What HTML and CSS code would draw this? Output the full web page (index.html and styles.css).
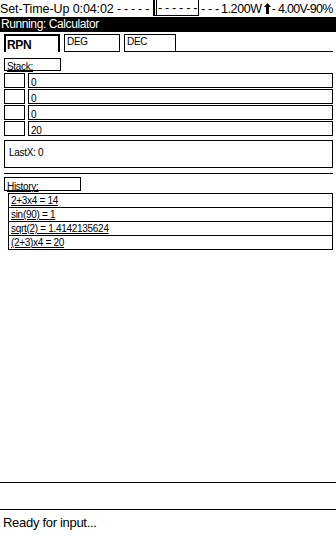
FILE: index.html
```html
<!DOCTYPE html>
<html lang="en">
<head>
  <meta charset="UTF-8">
  <title>Calculator</title>
  <link rel="stylesheet" href="styles.css">
</head>
<body>
  <div class="status">
    <span class="clock">Set-Time-Up 0:04:02</span>
    <span class="dashes">- - - - -</span>
    <span class="meter"><span class="needle"></span><span class="dashes">- - - - - -</span></span>
    <span class="dashes">- - -</span>
    <span class="power">1.200W</span>
    <svg class="arrow" width="7" height="11" viewBox="0 0 7 11"><path d="M3.5 0 L7 4 L5 4 L5 11 L2 11 L2 4 L0 4 Z" fill="#000"/></svg>
    <span class="battery">- 4.00V-90%</span>
  </div>
  <div class="titlebar">Running: Calculator</div>

  <div class="app">
    <div class="tabs">
      <div class="tab active">RPN</div>
      <div class="tab">DEG</div>
      <div class="tab">DEC</div>
      <div class="tab-fill"></div>
    </div>

    <div class="label">Stack:</div>
    <div class="stack">
      <div class="row"><div class="idx"></div><div class="val">0</div></div>
      <div class="row"><div class="idx"></div><div class="val">0</div></div>
      <div class="row"><div class="idx"></div><div class="val">0</div></div>
      <div class="row"><div class="idx"></div><div class="val">20</div></div>
    </div>

    <div class="lastx">LastX: 0</div>
    <div class="rule"></div>

    <div class="label history-label">History:</div>
    <div class="history">
      <div class="item">2+3x4 = 14</div>
      <div class="item">sin(90) = 1</div>
      <div class="item">sqrt(2) = 1.4142135624</div>
      <div class="item">(2+3)x4 = 20</div>
    </div>
  </div>

  <div class="bottom">
    <div class="input-line"></div>
    <div class="message">Ready for input...</div>
  </div>
</body>
</html>
```

FILE: styles.css
```css
html, body {
  margin: 0;
  padding: 0;
}
body {
  width: 336px;
  height: 536px;
  display: flex;
  flex-direction: column;
  font-family: "Liberation Sans", Arial, sans-serif;
  color: #000;
  background: #fff;
  overflow: hidden;
}

/* top status line */
.status {
  height: 17px;
  display: flex;
  align-items: center;
  font-size: 12.5px;
  white-space: nowrap;
  overflow: hidden;
}
.clock {
  width: 117px;
  letter-spacing: -0.1px;
}
.status .dashes {
  letter-spacing: -0.3px;
}
.meter {
  display: flex;
  align-items: center;
  height: 16px;
  width: 46px;
  box-sizing: border-box;
  border: 1px solid #000;
  border-top: none;
  margin: -1px 2px 0 4px;
  overflow: hidden;
}
.needle {
  width: 1px;
  height: 16px;
  border-left: 1px solid #000;
  border-right: 1px solid #000;
  margin-right: 1px;
}
.power {
  margin-left: 2px;
  letter-spacing: -0.4px;
}
.arrow {
  margin: 0 1px 0 2px;
}
.battery {
  letter-spacing: -0.7px;
}

.titlebar {
  height: 15px;
  line-height: 15px;
  background: #000;
  color: #fff;
  font-size: 12px;
  letter-spacing: -0.4px;
  padding-left: 1px;
}

/* main panel */
.app {
  padding: 2px 3px 0 4px;
  font-size: 10px;
  letter-spacing: -0.3px;
}
.tabs {
  display: flex;
  height: 18px;
}
.tab {
  width: 56px;
  box-sizing: border-box;
  border: 1px solid #000;
  margin-right: 4px;
  padding: 1px 2px;
}
.tab:nth-child(3) {
  width: 52px;
  margin-right: 0;
}
.tab.active {
  font-weight: bold;
  font-size: 12px;
  border-width: 2px;
  border-bottom: none;
  padding: 2px 1px;
}
.tab-fill {
  flex: 1;
  border-bottom: 1px solid #000;
}

.label {
  width: 57px;
  height: 13px;
  box-sizing: border-box;
  border: 1px solid #000;
  margin-top: 6px;
  padding: 2px 2px 0;
  line-height: 11px;
  text-decoration: underline;
}

.stack {
  display: flex;
  flex-direction: column;
  gap: 1px;
  margin-top: 2px;
}
.row {
  display: flex;
  gap: 3px;
  height: 15px;
}
.idx {
  width: 21px;
  box-sizing: border-box;
  border: 1px solid #000;
}
.val {
  flex: 1;
  box-sizing: border-box;
  border: 1px solid #000;
  padding: 4px 2px 0;
  line-height: 10px;
  overflow: hidden;
}

.lastx {
  height: 28px;
  box-sizing: border-box;
  border: 1px solid #000;
  margin-top: 4px;
  padding: 6px 4px 0;
}
.rule {
  height: 1px;
  background: #000;
  margin-top: 5px;
}

.history-label {
  width: 77px;
  height: 14px;
  margin-top: 3px;
  padding-top: 3px;
}
.history {
  margin: 2px 0 0 4px;
  border-left: 1px solid #000;
  border-right: 1px solid #000;
  border-bottom: 1px solid #000;
}
.item {
  height: 14px;
  box-sizing: border-box;
  border-top: 1px solid #000;
  padding: 2px 2px 0;
  line-height: 10px;
  text-decoration: underline;
  overflow: hidden;
}

/* bottom input and message */
.bottom {
  margin-top: auto;
}
.input-line {
  height: 26px;
  border-top: 1px solid #000;
  border-bottom: 1px solid #000;
}
.message {
  height: 26px;
  padding: 5px 3px 0;
  box-sizing: border-box;
  font-size: 13px;
  letter-spacing: -0.3px;
}
```
